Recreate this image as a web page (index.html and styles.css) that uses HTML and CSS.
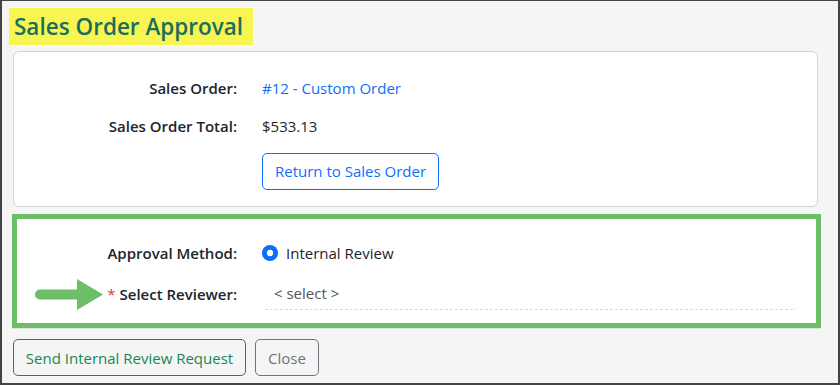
FILE: index.html
```html
<!DOCTYPE html>
<html>
<head>
<meta charset="utf-8">
<link rel="stylesheet" href="styles.css">
</head>
<body>
<div class="frame">
  <header class="head">
    <h1 class="title">Sales Order Approval</h1>
  </header>
  <section class="card info">
    <div class="row">
      <div class="label">Sales Order:</div>
      <div class="value"><a class="link" href="#">#12 - Custom Order</a></div>
    </div>
    <div class="row">
      <div class="label">Sales Order Total:</div>
      <div class="value">$533.13</div>
    </div>
    <div class="row btnrow">
      <div class="label"></div>
      <div class="value"><button class="btn btn-blue">Return to Sales Order</button></div>
    </div>
  </section>
  <section class="card review">
    <div class="row">
      <div class="label">Approval Method:</div>
      <div class="value radio-wrap"><span class="radio"></span><span>Internal Review</span></div>
    </div>
    <div class="row reviewer">
      <svg class="arrow" width="70" height="32" viewBox="0 0 70 32">
        <path d="M5 10.5 H42 V0 L68 15.5 L42 31 V20.5 H5 A5 5 0 0 1 5 10.5 Z" fill="#6dbf67"/>
      </svg>
      <div class="label"><span class="req">*</span> Select Reviewer:</div>
      <div class="value"><div class="select">&lt; select &gt;</div></div>
    </div>
  </section>
  <div class="actions">
    <button class="btn btn-green">Send Internal Review Request</button>
    <button class="btn btn-grey">Close</button>
  </div>
</div>
</body>
</html>
```
FILE: styles.css
```css
html, body {
  margin: 0;
  padding: 0;
}
body {
  font-family: "Open Sans", "Noto Sans", sans-serif;
  font-size: 15px;
  color: #212529;
  background: #f5f5f5;
}
.frame {
  width: 840px;
  height: 385px;
  box-sizing: border-box;
  border-style: solid;
  border-color: #444;
  border-width: 1px 2px 2px 2px;
  padding: 0 20px 0 11px;
  background: #f5f5f5;
}
.head {
  padding: 7px 0 0 0;
  margin-left: -4px;
}
.title {
  display: inline-block;
  margin: 0;
  background: #f8f552;
  color: #1b6e5a;
  font-size: 22.5px;
  font-weight: 600;
  line-height: 37px;
  height: 37px;
  padding: 0 10px 0 5px;
}
.card {
  background: #fff;
  border: 1px solid #d3d3d3;
  border-radius: 6px;
  margin-top: 6px;
  padding: 17px 0 16px 0;
}
.row {
  display: grid;
  grid-template-columns: 223px 1fr;
  column-gap: 25px;
  align-items: center;
  min-height: 38px;
  position: relative;
}
.label {
  text-align: right;
  font-weight: 600;
}
.link {
  color: #0d6efd;
  text-decoration: none;
}
.btnrow {
  margin-top: 7px;
}
.btn {
  font-family: inherit;
  font-size: 15px;
  background: transparent;
  border: 1px solid;
  border-radius: 5px;
  height: 37px;
  padding: 0 12px;
  cursor: pointer;
}
.btn-blue {
  color: #0d6efd;
  border-color: #0d6efd;
}
.review {
  border: 5px solid #6dbf67;
  border-radius: 0;
  margin-top: 7px;
  margin-left: -1px;
  margin-right: -3px;
  padding: 18px 0 13px 0;
  box-shadow: 0 1px 0 #e2e2e2;
}
.review .row {
  grid-template-columns: 220px 1fr;
  min-height: 32px;
}
.reviewer {
  margin-top: 9px;
}
.radio-wrap {
  display: flex;
  align-items: center;
  gap: 8px;
}
.radio {
  width: 16px;
  height: 16px;
  border-radius: 50%;
  background: radial-gradient(circle, #fff 0 3px, #0d6efd 3.6px);
}
.select {
  height: 32px;
  line-height: 30px;
  box-sizing: border-box;
  padding-left: 12px;
  color: #555;
  border-bottom: 1px dashed #d9d9d9;
  border-radius: 0 0 5px 5px;
  margin-right: 18px;
}
.req {
  color: #e53935;
  font-weight: 400;
}
.arrow {
  position: absolute;
  left: 18px;
  top: 1px;
}
.actions {
  display: flex;
  gap: 9px;
  margin-top: 11px;
}
.btn-green {
  color: #198754;
  border-color: #198754;
  width: 233px;
  padding: 0;
}
.btn-grey {
  color: #6c757d;
  border-color: #6c757d;
  width: 64px;
  padding: 0;
}
```
